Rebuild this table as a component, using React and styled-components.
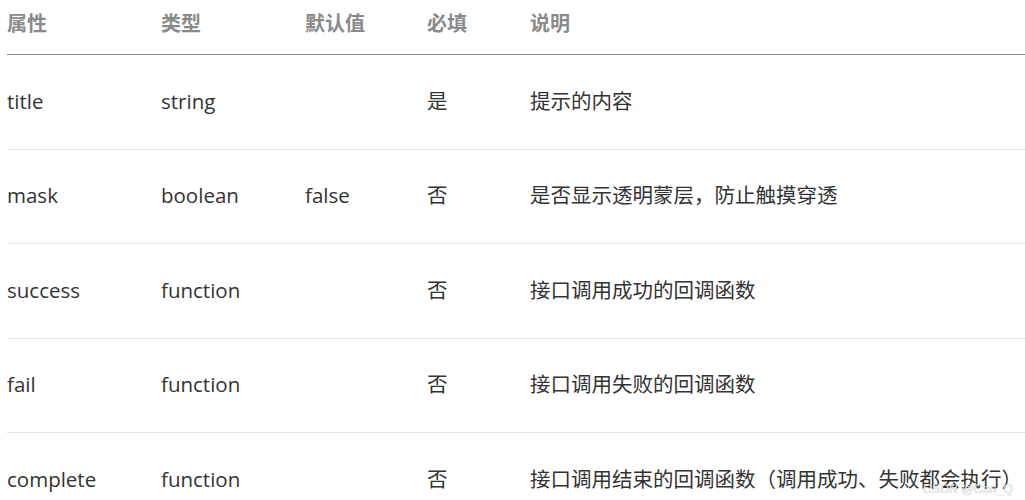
import React from "react"
import styled, { createGlobalStyle } from "styled-components"

const GlobalStyle = createGlobalStyle`
  html, body {
    margin: 0;
    padding: 0;
    background: #fff;
  }
  body {
    font-family: "Open Sans", "Noto Sans CJK SC", sans-serif;
    overflow: hidden;
  }
`

const Page = styled.div`
  position: relative;
  width: 1025px;
  height: 500px;
  padding-left: 7px;
  box-sizing: border-box;
  overflow: hidden;
`

const Row = styled.div`
  display: grid;
  grid-template-columns: 154px 144px 122px 103px 1fr;
  align-items: center;
  height: ${p => (p.$head ? "46px" : "93.5px")};
  padding-bottom: ${p => (p.$head ? "8px" : "0")};
  box-sizing: content-box;
  border-bottom: 1px solid ${p => (p.$head ? "#8c8c8c" : "#e4e4e4")};
  &:last-child {
    border-bottom: none;
  }
`

const Cell = styled.div`
  font-size: ${p => (p.$head ? "20px" : "20.5px")};
  line-height: 28px;
  white-space: nowrap;
  color: ${p => (p.$head ? "#8a8a8a" : "#333")};
  font-weight: ${p => (p.$head ? 700 : 400)};
  font-family: ${p =>
    p.$head
      ? `"Noto Sans CJK SC", sans-serif`
      : `"Open Sans", "Noto Sans CJK SC", sans-serif`};
  margin-top: ${p => (p.$head ? "0" : "-2px")};
`

const Watermark = styled.span`
  position: absolute;
  right: 12px;
  bottom: 4px;
  font-family: "Liberation Sans", sans-serif;
  font-size: 12px;
  color: rgba(255, 255, 255, 0.85);
  text-shadow: 0 0 1px rgba(0, 0, 0, 0.4);
  letter-spacing: 0.2px;
`

const head = ["属性", "类型", "默认值", "必填", "说明"]

const rows = [
  ["title", "string", "", "是", "提示的内容"],
  ["mask", "boolean", "false", "否", "是否显示透明蒙层，防止触摸穿透"],
  ["success", "function", "", "否", "接口调用成功的回调函数"],
  ["fail", "function", "", "否", "接口调用失败的回调函数"],
  ["complete", "function", "", "否", "接口调用结束的回调函数（调用成功、失败都会执行）"],
]

export default function App() {
  return (
    <>
      <GlobalStyle />
      <Page>
        <Row $head>
          {head.map(h => (
            <Cell $head key={h}>{h}</Cell>
          ))}
        </Row>
        {rows.map(r => (
          <Row key={r[0]}>
            {r.map((c, i) => (
              <Cell key={i}>{c}</Cell>
            ))}
          </Row>
        ))}
        <Watermark>CSDN @Carl_Q</Watermark>
      </Page>
    </>
  )
}
